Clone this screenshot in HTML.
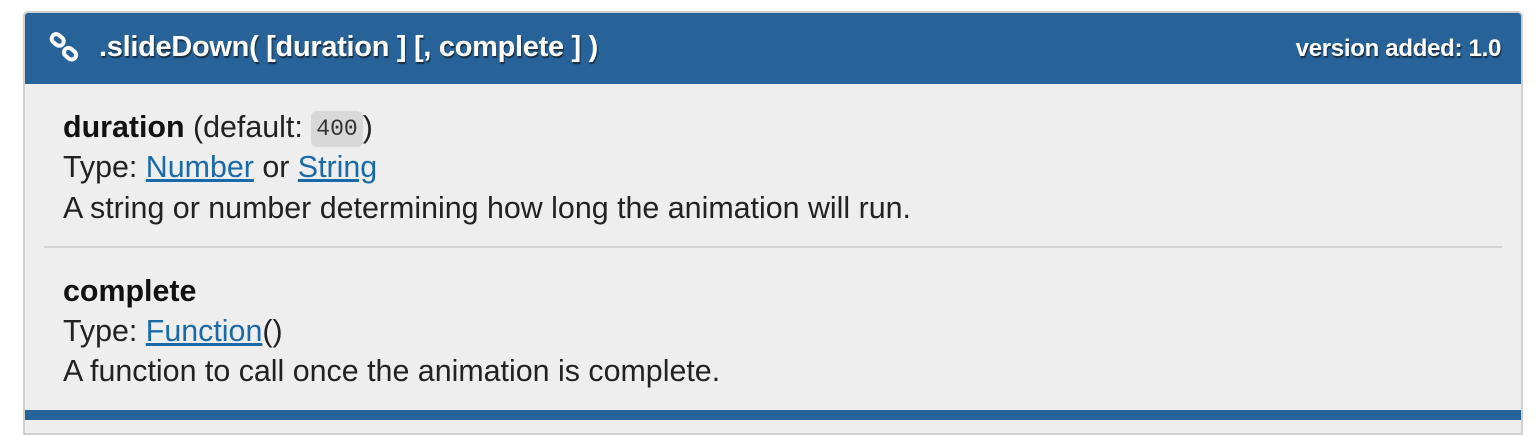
<!DOCTYPE html>
<html><head><style>
body{margin:0;background:#fff;width:1538px;height:414px;overflow:hidden;font-family:"Liberation Sans",sans-serif;}
.box{position:absolute;left:23px;top:11px;width:1496px;height:420px;background:#eeeeee;border:2px solid #cfcfcf;border-radius:5px 5px 0 0;overflow:hidden;}
.hd{position:absolute;left:0;top:0;right:0;height:71px;background:#276399;color:#fff;font-weight:bold;text-shadow:1px 2px 1px #1a2f44;}
.t{position:absolute;left:74px;top:18px;font-size:29px;letter-spacing:-0.3px;white-space:nowrap;}
.v{position:absolute;right:20px;top:22px;font-size:24px;letter-spacing:-0.3px;}
.ic{position:absolute;left:24px;top:19px;}
.p{position:absolute;left:38px;font-size:30.4px;color:#222;white-space:nowrap;}
.p b{color:#111}
a{color:#1a69a9;text-decoration:underline;}
code{font-family:"Liberation Mono",monospace;font-size:23px;background:#d8d8d8;border-radius:6px;padding:5px 5px;color:#333;vertical-align:2px;}
.sep{position:absolute;left:19px;width:1458px;top:233px;height:2px;background:#d2d2d2;}
.bot{position:absolute;left:0;right:0;top:397px;height:10px;background:#276399;}
</style></head><body>
<div class="box">
<div class="hd">
<svg class="ic" width="32" height="32" viewBox="0 0 32 32"><g fill="none" stroke="#fff" stroke-width="4"><rect x="2" y="3" width="13" height="9" rx="4.5" transform="rotate(40 8 8)"/><rect x="15" y="17" width="13" height="9" rx="4.5" transform="rotate(40 21 21)"/></g></svg>
<div class="t">.slideDown( [duration ] [, complete ] )</div>
<div class="v">version added: 1.0</div>
</div>
<div class="p" style="top:97px"><b>duration</b> (default: <code>400</code>)</div>
<div class="p" style="top:137px">Type: <a>Number</a> or <a>String</a></div>
<div class="p" style="top:178px">A string or number determining how long the animation will run.</div>
<div class="sep"></div>
<div class="p" style="top:261px"><b>complete</b></div>
<div class="p" style="top:301px">Type: <a>Function</a>()</div>
<div class="p" style="top:341px">A function to call once the animation is complete.</div>
<div class="bot"></div>
</div>
</body></html>
